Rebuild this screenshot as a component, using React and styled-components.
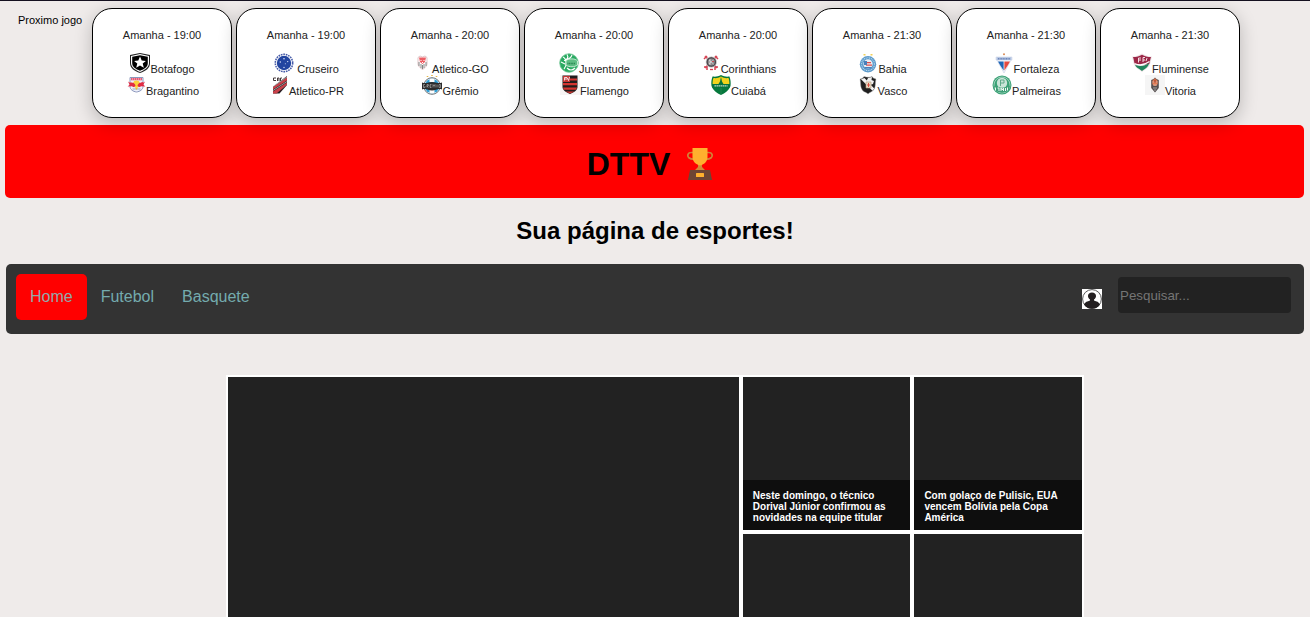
import React from "react";
import styled, { createGlobalStyle } from "styled-components";

const GlobalStyle = createGlobalStyle`
  * { box-sizing: border-box; }
  body {
    margin: 0;
    background: #efebea;
    font-family: "Liberation Sans", Arial, sans-serif;
    color: #000;
  }
`;

const Page = styled.div`
  height: 617px;
  overflow: hidden;
  border-top: 1px solid #14101f;
  padding: 7px 6px 0;
`;

const Matches = styled.section`
  position: relative;
  z-index: 1;
  display: flex;
  gap: 4px;
  height: 110px;
  padding-left: 12px;
  font-size: 11px;
`;

const MatchesLabel = styled.span`
  width: 70px;
  padding-top: 6px;
  white-space: nowrap;
`;

const MatchCard = styled.article`
  width: 140px;
  height: 110px;
  padding-top: 20px;
  border: 1px solid #000;
  border-radius: 20px;
  background: #fff;
  color: #222;
  text-align: center;
  box-shadow: 0 5px 18px rgba(0, 0, 0, 0.22);
`;

const MatchTime = styled.p`
  height: 13px;
  margin: 0 0 11px;
  line-height: 13px;
`;

const Team = styled.div`
  height: 22px;
  padding-left: 1px;
  white-space: nowrap;
  line-height: 12px;
`;

const Crest = styled.svg`
  width: 20px;
  height: 20px;
  vertical-align: baseline;
`;

const Banner = styled.header`
  display: flex;
  align-items: center;
  justify-content: center;
  height: 73px;
  margin: 7px 0 0 -1px;
  border-radius: 5px;
  background: #f00;
`;

const Title = styled.h1`
  display: flex;
  align-items: center;
  gap: 9px;
  margin: 0;
  padding-top: 5px;
  font-size: 32px;
  line-height: 38px;
`;

const Trophy = styled.svg`
  width: 43px;
  height: 32px;
  margin-top: -1px;
`;

const Subtitle = styled.h2`
  margin: 19px 0 20px;
  font-size: 24px;
  line-height: 27px;
  text-align: center;
`;

const Nav = styled.nav`
  display: flex;
  align-items: flex-start;
  height: 70px;
  padding: 10px 13px 0 10px;
  border-radius: 5px;
  background: #333;
`;

const NavLink = styled.a`
  padding: 14px;
  border-radius: 5px;
  background: ${(p) => (p.$active ? "#f00" : "transparent")};
  color: ${(p) => (p.$active ? "#93a8aa" : "#74abae")};
  font-size: 16px;
  line-height: 18px;
  text-decoration: none;
`;

const NavTools = styled.div`
  display: flex;
  align-items: flex-start;
  gap: 16px;
  margin-left: auto;
  padding-top: 3px;
`;

const Avatar = styled.svg`
  width: 20px;
  height: 20px;
  margin-top: 12px;
`;

const Search = styled.input`
  width: 173px;
  height: 36px;
  padding: 1px 2px;
  border: 0;
  border-radius: 4px;
  background: #222;
  color: #fff;
  font: 13.333px "Liberation Sans", Arial, sans-serif;
  &::placeholder { color: #757575; }
`;

const NewsGrid = styled.main`
  display: grid;
  grid-template-columns: 3fr 1fr 1fr;
  grid-auto-rows: 157px;
  width: 858px;
  margin: 41px auto 0;
`;

const NewsTile = styled.article`
  display: flex;
  align-items: flex-end;
  grid-row: ${(p) => (p.$featured ? "span 2" : "auto")};
  border: 2px solid #fff;
  background: #222;
`;

const Caption = styled.h3`
  width: 100%;
  height: 50px;
  margin: 0;
  padding: 10px 10px 0;
  background: #0e0e0e;
  color: #fff;
  font-size: 10px;
  line-height: 11px;
`;

const crests = {
  botafogo: (
    <>
      <path d="M10 0 20 2v8c0 5-4 8-10 10C4 18 0 15 0 10V2Z" fill="#222" />
      <path d="M10 1 19 3v7c0 4-4 7-9 9-5-2-9-5-9-9V3Z" fill="#fff" />
      <path d="M10 2.2 17.8 3.8V10c0 4-3.3 6-7.8 7.8C5.5 16 2.2 14 2.2 10V3.8Z" fill="#000" />
      <path d="m10 3.600 1.700 4 4.200.3-3.200 2.700 1.100 4.200-3.800-2.300-3.800 2.300 1.100-4.200-3.200-2.700 4.200-.3Z" fill="#fff" />
    </>
  ),
  bragantino: (
    <>
      <path d="M4 2.5h13v9c0 3-3 5-6.500 5.500C7 16.500 4 14.500 4 11.500Z" fill="#eef0fa" stroke="#8c98bd" />
      <path d="M5 3h11v2.300H5Z" fill="#e85a73" />
      <path d="M6 4h9" stroke="#fff" strokeWidth=".7" strokeDasharray="1 1" />
      <circle cx="10.500" cy="9" r="3.400" fill="#fbd13c" />
      <path d="M2 6.500c2 2 4 .3 6 1.800l1.600 2-1.500 2-2.500-1-4 .2 2-1.700Zm17 0c-2 2-4 .3-6 1.800l-1.600 2 1.500 2 2.500-1 4 .2-2-1.700Z" fill="#e22b43" />
      <path d="M6.500 14h8" stroke="#9aa6c3" />
      <path d="M9 12.500h3L10.500 15Z" fill="#f4c12e" />
    </>
  ),
  cruzeiro: (
    <>
      <circle cx="10" cy="10" r="8.700" fill="#fff" stroke="#465ba8" strokeWidth="1.500" strokeDasharray="1.700 .8" />
      <circle cx="10" cy="10" r="7.200" fill="#2345a0" />
      <g fill="#dfe6fa">
        <circle cx="10" cy="5.700" r=".8" />
        <circle cx="6.300" cy="9" r=".7" />
        <circle cx="13.700" cy="8.600" r=".7" />
        <circle cx="10" cy="14.500" r=".7" />
        <circle cx="11.300" cy="10.700" r=".5" />
      </g>
    </>
  ),
  atleticoPr: (
    <>
      <path d="M7 3H4.500v2.500H7M8.500 6V3H10v3M11.500 6V3H13" stroke="#44393b" strokeWidth="1" fill="none" />
      <path d="M18 1v9L10.500 18.500H4v-7L14 4Z" fill="#251d21" />
      <path d="M18 2.500 4 12v2.500L18 5.500Zm0 5L4 16.500v2h3.500L18 9.800Z" fill="#c9414a" />
      <path d="M18 6.500 4 15.500M18 2 4 11.500" stroke="#eee" strokeWidth=".6" />
    </>
  ),
  atleticoGo: (
    <>
      <path d="M6 4.500 8 3l2.500 1L13 3l2 1.500V11c0 2-2 4-4.500 5.500C8 15 6 13 6 11Z" fill="#fff" stroke="#d3acb0" strokeWidth=".7" />
      <path d="M7 4.500h7L13 9l-2.500 2L8 9Z" fill="#ed5e64" />
      <path d="M8.500 7.500h1M11.500 7.500h1M10.500 9v1" stroke="#fff" />
      <path d="M7 9v4m2-2v4m3-4v4m2-6v4m-3.500-1v4" stroke="#777" strokeWidth=".9" />
    </>
  ),
  gremio: (
    <>
      <path d="M5.500 1v1M10 0v1M14.500 1v1" stroke="#e8b84a" strokeWidth="1.600" />
      <circle cx="10" cy="11" r="8.300" fill="#fff" stroke="#444e56" strokeWidth=".8" />
      <circle cx="10" cy="11" r="7.300" fill="#2d9ed5" />
      <path d="M7.500 4h5v3h-5Zm0 11h5v3h-5Z" fill="#fff" />
      <path d="M0 7.500c4 1.500 6-.5 10-.5s6 2 10 .5v7c-4-1.500-6 1-10 1s-6-2.500-10-1Z" fill="#2b2b2c" />
      <path d="M3 9.500H1.500v3H3V11M5 12.500v-3h1.300v1.500H5l1.300 1.500M9.500 9.500H8v3h1.500M8 11h1.300M11 12.500v-3l1 1.500 1-1.500v3M15 9.500v3M17 9.500h1.500v3H17Z" stroke="#aaa" strokeWidth=".7" fill="none" />
    </>
  ),
  juventude: (
    <>
      <circle cx="10" cy="10" r="9.300" fill="#2aaa62" stroke="#72c796" strokeWidth=".8" />
      <path d="M4 4c4 2 4 9 1 12M8 1.500c2 3 0 5-3 6M2 9l4 2M8 15c3 3 6 2 8 0M13 2c-1 3-3 4-6 5" stroke="#fff" fill="none" strokeWidth="1.100" />
      <path d="M7 7.500c3-2 9-2.500 11.500.5v4C15 14.500 11 14 7 12.500Z" fill="#5ebd84" stroke="#dff4e7" strokeWidth=".8" />
      <path d="M8.500 10.500h8" stroke="#25844f" strokeWidth="1.500" strokeDasharray="1 .6" />
    </>
  ),
  flamengo: (
    <>
      <path d="M0 0h20v20H0Z" fill="#f7f4f4" />
      <path d="M2.500.5h15V12c0 3-3 5-7.500 7-4.500-2-7.500-4-7.500-7Z" fill="#211c1c" />
      <path d="M3 8h14v2.200H3Zm0 4.500h14c-.3 1-.6 1.600-1 2.200H4c-.5-.6-.8-1.300-1-2.200ZM9.500 3.500h7.500v2H9.500Zm-4 13h9L10 18.600Z" fill="#d53531" />
      <path d="M3 1h7v6H3Z" fill="#c43434" />
      <path d="M4.500 5.500v-3H7M4.500 4H7M7 2.500l1.500 3L9.500 2" stroke="#fff" strokeWidth=".8" fill="none" />
    </>
  ),
  corinthians: (
    <>
      <path d="M4 3 16 15M16 3 4 15" stroke="#d45c68" strokeWidth="1.600" />
      <path d="M3 6 6 3M14 3l3 3M3 14h3v3M14 17v-3h3" stroke="#d74253" strokeWidth="1.500" fill="none" />
      <path d="M9 16.500h3" stroke="#d74253" strokeWidth="1.300" />
      <circle cx="10.300" cy="9" r="5.300" fill="#4b474b" stroke="#ddd" strokeWidth=".7" />
      <circle cx="10.300" cy="9" r="3.500" fill="#8d898c" />
      <path d="m8 7 4.500 4M9 6v6m3.500-5L8 11" stroke="#e7e5e7" strokeWidth=".7" />
      <path d="M11 8.500h2" stroke="#c74953" />
    </>
  ),
  cuiaba: (
    <>
      <path d="M10 0c3 1.800 6 1.800 8.500 1.500 1 3 1.500 6 1 9.500C18 15.500 14 18 10 20 6 18 2 15.500.5 11 0 7.500.5 4.500 1.500 1.500 4 1.800 7 1.800 10 0Z" fill="#06783d" />
      <path d="M10 1.500c3 1.800 5 1.800 7.500 1.500.8 2 1 4 .8 7H1.700c-.2-3 0-5 .8-7 2.500.3 4.500.3 7.500-1.500Z" fill="#f2d31c" />
      <path d="m10 1.800 1 4.700 1.800 3H7.200l1.800-3Z" fill="#08733c" />
      <path d="M1 9h18v3.500H1Z" fill="#087340" />
      <path d="M3.500 10.800h13" stroke="#cce4d5" strokeWidth="1.300" strokeDasharray="1.400 .6" />
      <path d="M10 13v6" stroke="#348c5c" strokeWidth=".6" />
    </>
  ),
  bahia: (
    <>
      <path d="M6.500 1v1.600M13.500 1v1.600" stroke="#f3d157" strokeWidth="2" />
      <circle cx="10" cy="11.200" r="8.200" fill="#5b9acb" />
      <circle cx="10" cy="11.200" r="6.400" fill="none" stroke="#bddaec" strokeWidth="1.100" strokeDasharray="1 .8" />
      <circle cx="10" cy="11" r="4.700" fill="#e6eef5" />
      <path d="M8 9h5v1.300H8Zm0 2.500h6v1.300H8Z" fill="#df4c4a" />
      <path d="M6 8h3v4H6Zm0 6h8l-1 1.500H7.500Z" fill="#4a80bb" />
    </>
  ),
  vasco: (
    <>
      <path d="M2 4c2-.3 3-1 4-2.500 3 1 6 1 8 0 1 1.500 2 2 4 2.500-1 4 0 7-2 10.500-2 2.500-4 2.500-6 4.500-2-2-5-2-6-4.500C2 11 3 8 2 4Z" fill="#202020" stroke="#aaa" strokeWidth=".4" />
      <path d="m3 4.300 11.500 11.500 1.700-2.300L6.500 3Z" fill="#f5f5f5" />
      <path d="m10 3 4-1-.5 3 2.500 1-1 3-3 1-4-3Z" fill="#f0f0f0" />
      <path d="M8 7h5v6H8Z" fill="#e9ddc9" stroke="#b69b78" strokeWidth=".6" />
      <path d="M10.500 8v4m-1.500-2h3" stroke="#d95043" />
    </>
  ),
  fortaleza: (
    <>
      <circle cx="10" cy="1.300" r="1" fill="#d98b55" />
      <path d="M2 4h16v3h-1l-2 4-5 9-5-9-2-4H2Z" fill="#f4f7fd" stroke="#c0cbe2" strokeWidth=".5" />
      <path d="M2.500 4.200h15v3h-15Z" fill="#afc0df" />
      <path d="M4 5.700h12" stroke="#6e86b9" strokeWidth="1.400" strokeDasharray="1 .6" />
      <path d="M4 8.500h5.600v9L6 12Z" fill="#1e66b6" />
      <path d="M10.400 8.500H16L14 12l-3.600 5.500Z" fill="#e54a3f" />
    </>
  ),
  palmeiras: (
    <>
      <circle cx="10" cy="10" r="9.500" fill="#3aa276" />
      <circle cx="10" cy="10" r="8" fill="none" stroke="#c4e2d5" strokeWidth=".7" />
      <circle cx="10" cy="8" r="5.200" fill="#c9e4d8" />
      <path d="M8.500 11V5H12v3H8.500" stroke="#55a583" fill="none" strokeWidth=".9" />
      <path d="M2 10.500c5 3 11 3 16 0l-1 5c-4 2.500-10 2.500-14 0Z" fill="#3f9f77" />
      <path d="M3.500 12.500v3m2-2.500h1.500v3M9 16v-3l1.200 2 1.300-2v3m2-3v3m2-3.500v3" stroke="#f0f8f4" strokeWidth="1" fill="none" />
    </>
  ),
  fluminense: (
    <>
      <path d="M0 3.500c3 0 5-.5 8-2l2-1 2 1c3 1.500 5 2 8 2-1 3-1 7-3 10-2 2.500-4.500 3-7 5.500-2.500-2.500-5-3-7-5.500-2-3-2-7-3-10Z" fill="#eee2e5" />
      <path d="M1 4c4 0 6-.7 9-2.300C13 3.300 15 4 19 4c-1 3-1 4.500-1.700 7L10 12 2.700 11C2 8.500 2 7 1 4Z" fill="#9b2747" />
      <path d="M3 11.500c4 2.500 10 1.500 14-1.500-.7 5-4.500 5.500-7 8-2.500-2.500-6-3-7-6.500Z" fill="#22845c" />
      <path d="M2.500 10.500c5 2.500 10 1.500 15-2" stroke="#fff" strokeWidth="1.100" fill="none" />
      <path d="M6.500 9.500V5H9M6.500 7H9M11 9V4.500h2M11 7h2M14 8l1-3" stroke="#f4dfe4" fill="none" strokeWidth="1" />
    </>
  ),
  vitoria: (
    <>
      <path d="M0 0h20v20H0Z" fill="#f5f5f5" />
      <path d="m10 2.500 1.500 1.500 2.300 1v8L10 17.500 6.200 13V5l2.300-1Z" fill="#565050" />
      <path d="m10 3 2.700 3v3L11 11H9L7.300 9V6Z" fill="#e37a52" />
      <path d="M7.500 7h1.800m1.400 0h1.800M8 10h4M8 13h4m-3 2h2" stroke="#c9c6c3" strokeWidth=".7" />
      <path d="M10 4.500v3" stroke="#983b28" />
    </>
  ),
};

const matches = [
  ["Amanha - 19:00", ["botafogo", "Botafogo"], ["bragantino", "Bragantino"]],
  ["Amanha - 19:00", ["cruzeiro", " Cruseiro"], ["atleticoPr", "Atletico-PR"]],
  ["Amanha - 20:00", ["atleticoGo", "Atletico-GO"], ["gremio", "Grêmio"]],
  ["Amanha - 20:00", ["juventude", "Juventude"], ["flamengo", "Flamengo"]],
  ["Amanha - 20:00", ["corinthians", "Corinthians"], ["cuiaba", "Cuiabá"]],
  ["Amanha - 21:30", ["bahia", "Bahia"], ["vasco", "Vasco"]],
  ["Amanha - 21:30", ["fortaleza", "Fortaleza"], ["palmeiras", "Palmeiras"]],
  ["Amanha - 21:30", ["fluminense", "Fluminense"], ["vitoria", "Vitoria"]],
];

const news = [
  "Neste domingo, o técnico Dorival Júnior confirmou as novidades na equipe titular",
  "Com golaço de Pulisic, EUA vencem Bolívia pela Copa América",
];

export default function App() {
  return (
    <Page>
      <GlobalStyle />
      <Matches>
        <MatchesLabel>Proximo jogo</MatchesLabel>
        {matches.map(([time, ...teams]) => (
          <MatchCard key={teams[0][0]}>
            <MatchTime>{time}</MatchTime>
            {teams.map(([id, name]) => (
              <Team key={id}>
                <Crest viewBox="0 0 20 20" aria-hidden="true">{crests[id]}</Crest>
                {name}
              </Team>
            ))}
          </MatchCard>
        ))}
      </Matches>

      <Banner>
        <Title>
          DTTV
          <Trophy viewBox="0 0 43 32" aria-hidden="true">
            <path d="M14 4.500h-1.500c-4 0-4.500 3.300-2.800 5.200 1.300 1.300 3 1.600 6.300 1.600M28 4.500h1.500c4 0 4.500 3.300 2.800 5.200-1.300 1.300-3 1.600-6.300 1.600" fill="none" stroke="#cf8439" strokeWidth="1.700" />
            <path d="M19 16h4v3l3 3H16l3-3Z" fill="#d18a38" />
            <path d="M13.500 0h15v9c0 4-3 7.500-7.500 8.500-4.500-1-7.500-4.500-7.500-8.500Z" fill="#ffb02e" />
            <path d="M11 22h20l2 10H9Z" fill="#6d4534" />
            <rect x="17" y="25" width="8" height="4" rx=".5" fill="#ffb02e" />
          </Trophy>
        </Title>
      </Banner>

      <Subtitle>Sua página de esportes!</Subtitle>

      <Nav>
        <NavLink $active>Home</NavLink>
        <NavLink>Futebol</NavLink>
        <NavLink>Basquete</NavLink>
        <NavTools>
          <Avatar viewBox="0 0 20 20" aria-hidden="true">
            <path d="M0 0h20v20H0Z" fill="#fff" />
            <circle cx="10" cy="10" r="9.400" fill="#fff" stroke="#444" strokeWidth=".9" />
            <path d="M2 15.500c1-2.700 3.500-3 6-4v-1C6.500 9.500 6 8.300 6 7 6 4.700 7.700 3.500 10 3.500S14 4.700 14 7c0 1.300-.5 2.500-2 3.500v1c2.500 1 5 1.300 6 4-2 3-4.500 4.200-8 4.200s-6-1.200-8-4.200Z" fill="#231f20" />
          </Avatar>
          <Search placeholder="Pesquisar..." aria-label="Pesquisar" />
        </NavTools>
      </Nav>

      <NewsGrid>
        <NewsTile $featured />
        {news.map((headline) => (
          <NewsTile key={headline}>
            <Caption>{headline}</Caption>
          </NewsTile>
        ))}
        <NewsTile />
        <NewsTile />
      </NewsGrid>
    </Page>
  );
}
